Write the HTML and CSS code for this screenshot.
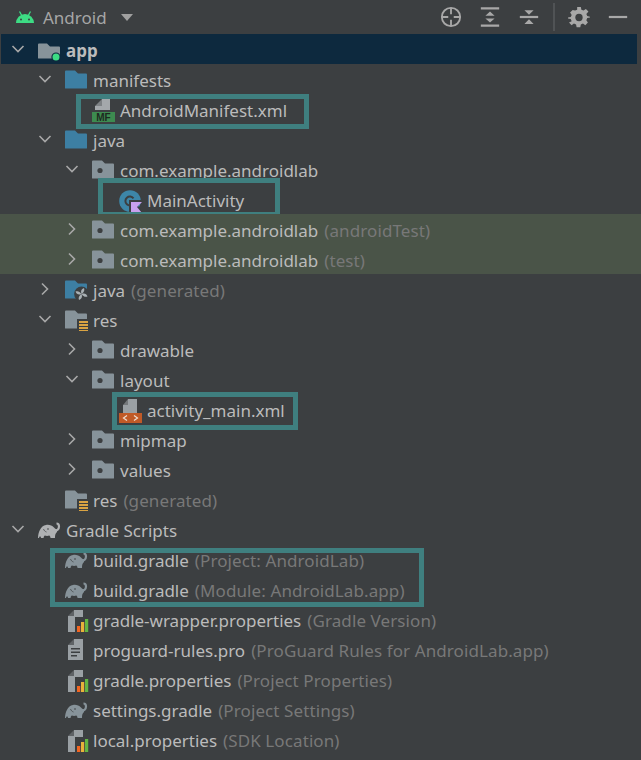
FILE: index.html
```html
<!DOCTYPE html>
<html lang="en">
<head>
<meta charset="utf-8">
<title>Android project tree</title>
<link rel="stylesheet" href="styles.css">
</head>
<body>
<svg class="defs" width="0" height="0" aria-hidden="true">
  <defs>
    <path id="folder-shape" d="M0 4.500a1 1 0 0 1 1-1h9l3 3h8a1 1 0 0 1 1 1V21a.6.6 0 0 1-.6.6H.6A.6.6 0 0 1 0 21z"/>
    <symbol id="chev-down" viewBox="0 0 14 14"><path d="M1.500 4 7 9.500 12.500 4" fill="none" stroke="#a8a8a8" stroke-width="1.600"/></symbol>
    <symbol id="chev-right" viewBox="0 0 14 14"><path d="M4 1.500 9.500 7 4 12.500" fill="none" stroke="#a8a8a8" stroke-width="1.600"/></symbol>
    <symbol id="module" viewBox="0 0 24 24"><path d="M0 7.500a1 1 0 0 1 1-1h8l3 3h9a1 1 0 0 1 1 1V21a.6.6 0 0 1-.6.6H.6A.6.6 0 0 1 0 21z" fill="#87939a"/><circle cx="18" cy="20" r="4.600" fill="#0d293e"/><circle cx="18" cy="20" r="3.500" fill="#3ddc84"/></symbol>
    <symbol id="blue" viewBox="0 0 24 24"><use href="#folder-shape" fill="#3d7fa3"/></symbol>
    <symbol id="package" viewBox="0 0 24 24"><use href="#folder-shape" fill="#87939a"/><circle cx="8" cy="13.500" r="2.600" fill="#3c3f41"/></symbol>
    <symbol id="java-gen" viewBox="0 0 24 24"><use href="#folder-shape" fill="#3d7fa3"/><circle cx="16.500" cy="17" r="7.400" fill="#3c3f41"/><g fill="#a9b0b4"><path d="M16.500 17c-1.200-3-.2-5 2.500-6 1 2.200-.2 4.500-2.500 6z"/><path d="M16.500 17c3-1.200 5-.2 6 2.500-2.200 1-4.500-.2-6-2.500z"/><path d="M16.500 17c1.200 3 .2 5-2.500 6-1-2.200.2-4.500 2.500-6z"/><path d="M16.500 17c-3 1.200-5 .2-6-2.500 2.200-1 4.500.2 6 2.500z"/></g></symbol>
    <symbol id="res" viewBox="0 0 24 24"><use href="#folder-shape" fill="#87939a"/><rect x="12" y="12" width="12" height="13" fill="#3c3f41"/><g fill="#d9a343"><rect x="14" y="14" width="9" height="2"/><rect x="14" y="17" width="9" height="2"/><rect x="14" y="20" width="9" height="2"/><rect x="14" y="23" width="9" height="2"/></g></symbol>
    <symbol id="manifest" viewBox="0 0 24 26"><path d="M10 2h8v11H3V9h7z" fill="#a4a8ab"/><path d="M10 2v7H3z" fill="#7d8184"/><rect x="0" y="15" width="23" height="10" fill="#3d8b50"/><text x="11.500" y="24" class="tag">MF</text></symbol>
    <symbol id="layout-xml" viewBox="0 0 24 26"><path d="M9 2h9v14H4V8h5z" fill="#9aa0a4"/><path d="M9 2v6H4z" fill="#74787b"/><rect x="0" y="16" width="23" height="10" fill="#c05a27"/><path d="M8 18.500 4.500 21 8 23.500M15 18.500 18.500 21 15 23.500" fill="none" stroke="#f0e0d4" stroke-width="1.200"/></symbol>
    <symbol id="kotlin" viewBox="0 0 24 26"><circle cx="11" cy="14" r="10.800" fill="#3d86a8"/><path d="M14.500 11.300A4.500 4.500 0 1 0 14.500 16.700" fill="none" stroke="#3c3f41" stroke-width="2"/><path d="M10 13h14l-5 6 5 7H10z" fill="#3c3f41"/><path d="M12 15h11l-5 5 5 6H12z" fill="#c9a0ee"/></symbol>
    <symbol id="elephant" viewBox="0 0 24 24"><path d="M0 21c.3-6 2.500-12 8-13 3-.5 6 .3 8 2.500 1.500 1.500 2 2 3 1.500v3c-1 1-2 2-2 6h-4.500c0-1-.5-2-1.200-2.500-1.500.5-3 .5-4.500 0-.7.5-1.200 1.500-1.200 2.500H3c0-.8-.4-1.500-1-1.800-.6.3-1 1-1 1.800z" fill="currentColor"/><path d="M16 14c3 0 5-2 5-4.500 0-1.500-1-3-2.500-3" fill="none" stroke="currentColor" stroke-width="2.200"/><circle cx="10" cy="12" r=".8" fill="#3c3f41"/><path d="M5.500 12c.5 1.500 1.500 2.500 3 3" fill="none" stroke="#3c3f41" stroke-width=".7"/></symbol>
    <symbol id="props" viewBox="0 0 24 26"><path d="M9 3h9v22H3V9h6z" fill="#9aa0a4"/><path d="M9 3v6H3z" fill="#5f6366"/><rect x="10" y="10" width="14" height="16" fill="#3c3f41"/><rect x="12" y="19" width="3.200" height="6" fill="#f26522"/><rect x="16" y="15" width="3.200" height="10" fill="#e8b23a"/><rect x="20" y="12" width="3.200" height="13" fill="#62b543"/></symbol>
    <symbol id="text-file" viewBox="0 0 24 26"><path d="M9 2h9v21H3V8h6z" fill="#9aa0a4"/><path d="M9 2v6H3z" fill="#5f6366"/><g fill="#3c3f41"><rect x="6" y="11" width="9" height="1.500"/><rect x="6" y="14.500" width="9" height="1.500"/><rect x="6" y="18" width="6" height="1.500"/></g></symbol>
  </defs>
</svg>

<main class="panel">
  <header class="toolbar">
    <svg class="android" viewBox="0 0 20 14" aria-hidden="true"><path d="M1 13a9 9 0 0 1 18 0z" fill="#3ddc84"/><path d="M4.500 1.500 7 6M15.500 1.500 13 6" stroke="#3ddc84" stroke-width="1.300"/><circle cx="6" cy="9.500" r="1" fill="#3c3f41"/><circle cx="14" cy="9.500" r="1" fill="#3c3f41"/></svg>
    <span class="view-name">Android</span>
    <svg class="caret" viewBox="0 0 12 7" aria-hidden="true"><path d="M0 0h12L6 7z" fill="#a0a0a0"/></svg>
    <div class="tools">
      <svg class="tool" viewBox="0 0 24 24" aria-hidden="true"><circle cx="12" cy="12" r="10" fill="none" stroke="#a8a8a8" stroke-width="2"/><path d="M12 2v7M12 15v7M2 12h7M15 12h7" stroke="#a8a8a8" stroke-width="2"/></svg>
      <svg class="tool" viewBox="0 0 24 24" aria-hidden="true"><path d="M2 2.500h20M2 21.500h20" stroke="#a8a8a8" stroke-width="2.400"/><path d="M12 6l5 4.500H7zM12 18l-5-4.500h10z" fill="#a8a8a8"/></svg>
      <svg class="tool" viewBox="0 0 24 24" aria-hidden="true"><path d="M2 12h20" stroke="#a8a8a8" stroke-width="2.400"/><path d="M12 9.500 7 4.500h10zM12 14.500l5 5H7z" fill="#a8a8a8"/></svg>
      <span class="divider"></span>
      <svg class="tool" viewBox="0 0 24 24" aria-hidden="true"><path d="M10 1h4l.6 3 2.300 1 2.600-1.700 2.800 2.800L20 8.700l1 2.300 3 .6v1l-3 .6-1 2.300 1.700 2.600-2.800 2.800-2.600-1.700-2.300 1-.6 3h-4l-.6-3-2.300-1-2.600 1.700-2.800-2.800L4 16.500l-1-2.300-3-.6v-1l3-.6 1-2.300-1.700-2.600 2.800-2.800L7.700 5 10 4z" fill="#a8a8a8"/><circle cx="12" cy="12.500" r="4" fill="#3c3f41"/></svg>
      <svg class="tool" viewBox="0 0 24 24" aria-hidden="true"><path d="M2 12h20" stroke="#a8a8a8" stroke-width="2.400"/></svg>
    </div>
  </header>

  <ul class="tree">
    <li class="row lvl0 selected"><svg class="chev"><use href="#chev-down"/></svg><svg class="icon"><use href="#module"/></svg><span class="name strong">app</span></li>
    <li class="row lvl1"><svg class="chev"><use href="#chev-down"/></svg><svg class="icon"><use href="#blue"/></svg><span class="name">manifests</span></li>
    <li class="row lvl2"><span class="chev"></span><svg class="icon tall"><use href="#manifest"/></svg><span class="name">AndroidManifest.xml</span><span class="box box-manifest"></span></li>
    <li class="row lvl1"><svg class="chev"><use href="#chev-down"/></svg><svg class="icon"><use href="#blue"/></svg><span class="name">java</span></li>
    <li class="row lvl2"><svg class="chev"><use href="#chev-down"/></svg><svg class="icon"><use href="#package"/></svg><span class="name">com.example.androidlab</span></li>
    <li class="row lvl3"><span class="chev"></span><svg class="icon tall"><use href="#kotlin"/></svg><span class="name">MainActivity</span><span class="box box-main"></span></li>
    <li class="row lvl2 tested"><svg class="chev"><use href="#chev-right"/></svg><svg class="icon"><use href="#package"/></svg><span class="name">com.example.androidlab</span><span class="hint">(androidTest)</span></li>
    <li class="row lvl2 tested"><svg class="chev"><use href="#chev-right"/></svg><svg class="icon"><use href="#package"/></svg><span class="name">com.example.androidlab</span><span class="hint">(test)</span></li>
    <li class="row lvl1"><svg class="chev"><use href="#chev-right"/></svg><svg class="icon"><use href="#java-gen"/></svg><span class="name">java</span><span class="hint">(generated)</span></li>
    <li class="row lvl1"><svg class="chev"><use href="#chev-down"/></svg><svg class="icon"><use href="#res"/></svg><span class="name">res</span></li>
    <li class="row lvl2"><svg class="chev"><use href="#chev-right"/></svg><svg class="icon"><use href="#package"/></svg><span class="name">drawable</span></li>
    <li class="row lvl2"><svg class="chev"><use href="#chev-down"/></svg><svg class="icon"><use href="#package"/></svg><span class="name">layout</span></li>
    <li class="row lvl3"><span class="chev"></span><svg class="icon tall"><use href="#layout-xml"/></svg><span class="name">activity_main.xml</span><span class="box box-layout"></span></li>
    <li class="row lvl2"><svg class="chev"><use href="#chev-right"/></svg><svg class="icon"><use href="#package"/></svg><span class="name">mipmap</span></li>
    <li class="row lvl2"><svg class="chev"><use href="#chev-right"/></svg><svg class="icon"><use href="#package"/></svg><span class="name">values</span></li>
    <li class="row lvl1"><span class="chev"></span><svg class="icon"><use href="#res"/></svg><span class="name">res</span><span class="hint">(generated)</span></li>
    <li class="row lvl0"><svg class="chev"><use href="#chev-down"/></svg><svg class="icon root-gradle"><use href="#elephant"/></svg><span class="name">Gradle Scripts</span></li>
    <li class="row lvl1"><span class="chev"></span><svg class="icon"><use href="#elephant"/></svg><span class="name">build.gradle</span><span class="hint">(Project: AndroidLab)</span><span class="box box-gradle"></span></li>
    <li class="row lvl1"><span class="chev"></span><svg class="icon"><use href="#elephant"/></svg><span class="name">build.gradle</span><span class="hint">(Module: AndroidLab.app)</span></li>
    <li class="row lvl1"><span class="chev"></span><svg class="icon tall"><use href="#props"/></svg><span class="name">gradle-wrapper.properties</span><span class="hint">(Gradle Version)</span></li>
    <li class="row lvl1"><span class="chev"></span><svg class="icon tall"><use href="#text-file"/></svg><span class="name">proguard-rules.pro</span><span class="hint">(ProGuard Rules for AndroidLab.app)</span></li>
    <li class="row lvl1"><span class="chev"></span><svg class="icon tall"><use href="#props"/></svg><span class="name">gradle.properties</span><span class="hint">(Project Properties)</span></li>
    <li class="row lvl1"><span class="chev"></span><svg class="icon"><use href="#elephant"/></svg><span class="name">settings.gradle</span><span class="hint">(Project Settings)</span></li>
    <li class="row lvl1"><span class="chev"></span><svg class="icon tall"><use href="#props"/></svg><span class="name">local.properties</span><span class="hint">(SDK Location)</span></li>
  </ul>
</main>
</body>
</html>
```

FILE: styles.css
```css
* { box-sizing: border-box; }

html, body {
  margin: 0;
  height: 100%;
  background: #3c3f41;
}

body {
  overflow: hidden;
  font-family: "Noto Sans", "Open Sans", sans-serif;
  font-size: 17px;
  color: #bbbbbb;
}

.defs { position: absolute; }

.tag {
  font: 700 10px "Liberation Sans", sans-serif;
  fill: #1d2a20;
  text-anchor: middle;
}

.panel {
  height: 760px;
  display: flex;
  flex-direction: column;
}

.toolbar {
  height: 34px;
  display: flex;
  align-items: center;
  padding-left: 15px;
}

.android { width: 20px; height: 14px; }

.view-name {
  margin-left: 8px;
  color: #a6a6a6;
}

.caret { width: 12px; height: 7px; margin-left: 14px; }

.tools {
  margin-left: auto;
  margin-right: 12px;
  display: flex;
  align-items: center;
}

.tool { width: 22px; height: 22px; margin-left: 17px; }

.divider {
  width: 2px;
  height: 28px;
  margin: 0 -4px 0 13px;
  background: #505355;
}

.tree {
  list-style: none;
  margin: 0;
  padding: 0 4px 0 1px;
}

.row {
  position: relative;
  height: 30px;
  display: flex;
  align-items: center;
  white-space: nowrap;
}

.lvl0 { padding-left: 7px; }
.lvl1 { padding-left: 34px; }
.lvl2 { padding-left: 61px; }
.lvl3 { padding-left: 88px; }

.selected { background: #0d293e; }
.tested { background: #4a5448; margin: 0 -4px 0 -1px; padding-left: 62px; }

.chev {
  flex: none;
  width: 14px;
  height: 14px;
  margin-left: 3px;
  margin-right: 13px;
}

.icon {
  flex: none;
  width: 24px;
  height: 24px;
  margin-right: 4px;
  color: #87939a;
}

.icon.tall { height: 26px; margin-top: 2px; }

.root-gradle { color: #afb1b3; }

.name { position: relative; top: 1px; }
.strong { font-weight: 700; }

.hint {
  position: relative;
  top: 1px;
  margin-left: 6px;
  letter-spacing: .1px;
  color: #787878;
}

.box {
  position: absolute;
  border: 5px solid #3f7f7f;
  pointer-events: none;
}

.box-manifest { left: 75px; top: 0; width: 233px; height: 35px; }
.box-main { left: 97px; top: -6px; width: 182px; height: 39px; }
.box-layout { left: 111px; top: -2px; width: 186px; height: 38px; }
.box-gradle { left: 49px; top: 4px; width: 374px; height: 59px; }
```
